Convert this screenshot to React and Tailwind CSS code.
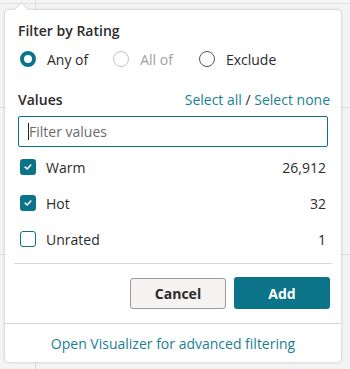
import React from "react";

function Radio({ checked, disabled, label }) {
  return (
    <label className="flex items-center gap-[11px]">
      <span
        className={
          "box-border w-[16px] h-[16px] rounded-full bg-white " +
          (checked
            ? "border-[4px] border-[#0b7489]"
            : disabled
            ? "border border-[#c4c4c4]"
            : "border border-[#555]")
        }
      />
      <span className={disabled ? "text-[#a0a0a0]" : "text-[#2b2b2b]"}>{label}</span>
    </label>
  );
}

function Check({ checked, label, count }) {
  return (
    <div className="flex items-center h-[36px]">
      {checked ? (
        <span className="w-[16px] h-[16px] rounded-[3px] bg-[#0b7489] flex items-center justify-center ml-[2px]">
          <svg width="10" height="10" viewBox="0 0 10 10">
            <path d="M2.2 5.2 L4.2 7 L7.8 3" fill="none" stroke="white" strokeWidth="1.6" strokeLinecap="round" strokeLinejoin="round" />
          </svg>
        </span>
      ) : (
        <span className="box-border w-[16px] h-[16px] rounded-[3px] border border-[#0b7489] bg-white ml-[2px]" />
      )}
      <span className="ml-[10px] text-[#2b2b2b]">{label}</span>
      <span className="ml-auto text-[#2b2b2b] mr-[2px]">{count}</span>
    </div>
  );
}

export default function App() {
  return (
    <div
      className="relative w-[350px] h-[369px] bg-[#f4f4f4] overflow-hidden text-[14px]"
      style={{ fontFamily: '"Open Sans", "Noto Sans", sans-serif' }}
    >
      {/* background grid lines */}
      <div className="absolute left-0 right-0 top-[3px] h-px bg-[#e2e2e2]" />
      <div className="absolute left-0 right-0 top-[107px] h-px bg-[#dcdcdc]" />
      <div className="absolute left-0 right-0 top-[254px] h-px bg-[#dcdcdc]" />
      <div className="absolute top-0 bottom-0 left-[35px] w-px bg-[#dcdcdc]" />

      {/* popover */}
      <div className="absolute left-[5px] top-[10px] w-[336px] h-[352px] bg-white rounded-[4px] shadow-[0_0_3px_rgba(0,0,0,0.25)] flex flex-col">
        {/* caret */}
        <div className="absolute left-[11px] top-[-6px] w-[11px] h-[11px] bg-white rotate-45 border-l border-t border-[#d8d8d8]" />
        <div className="px-[13px] pt-[10px] flex flex-col relative">
          <div className="font-semibold text-[#2b2b2b] text-[14px] leading-[22px]">Filter by Rating</div>
          <div className="flex items-center mt-[7px] ml-[2px] h-[20px] text-[14px]">
            <Radio checked label="Any of" />
            <div className="ml-[25px]"><Radio disabled label="All of" /></div>
            <div className="ml-[26px]"><Radio label="Exclude" /></div>
          </div>
          <div className="flex items-center justify-between mt-[19px] h-[22px]">
            <span className="font-semibold text-[#2b2b2b] text-[14px]">Values</span>
            <span className="text-[#1a7f94] text-[14px] mr-[-2px]">
              Select all <span className="text-[#2b2b2b]">/</span> Select none
            </span>
          </div>
          <div className="mt-[6px] h-[31px] border border-[#0b7489] rounded-[2px] flex items-center px-[9px]">
            <span className="w-px h-[17px] bg-[#222]" />
            <span className="text-[#6b6b6b] text-[14px]">Filter values</span>
          </div>
          <div className="flex flex-col mt-[2px] text-[14px]">
            <Check checked label="Warm" count="26,912" />
            <Check checked label="Hot" count="32" />
            <Check label="Unrated" count="1" />
          </div>
        </div>
        <div className="mx-[9px] mt-[6px] h-px bg-[#d6d6d6]" />
        <div className="flex justify-end items-center gap-[8px] px-[11px] pt-[13px] pb-[14px]">
          <button className="w-[96px] h-[31px] rounded-[3px] border border-[#9a9a9a] bg-[#f4f3f2] font-bold text-[#2b2b2b] text-[14px]">
            Cancel
          </button>
          <button className="w-[96px] h-[32px] rounded-[3px] bg-[#0b7489] font-bold text-white text-[14px]">
            Add
          </button>
        </div>
        <div className="h-px bg-[#d6d6d6]" />
        <div className="flex-1 flex items-center justify-center text-[#1a7f94] text-[14px]">
          Open Visualizer for advanced filtering
        </div>
      </div>
    </div>
  );
}
